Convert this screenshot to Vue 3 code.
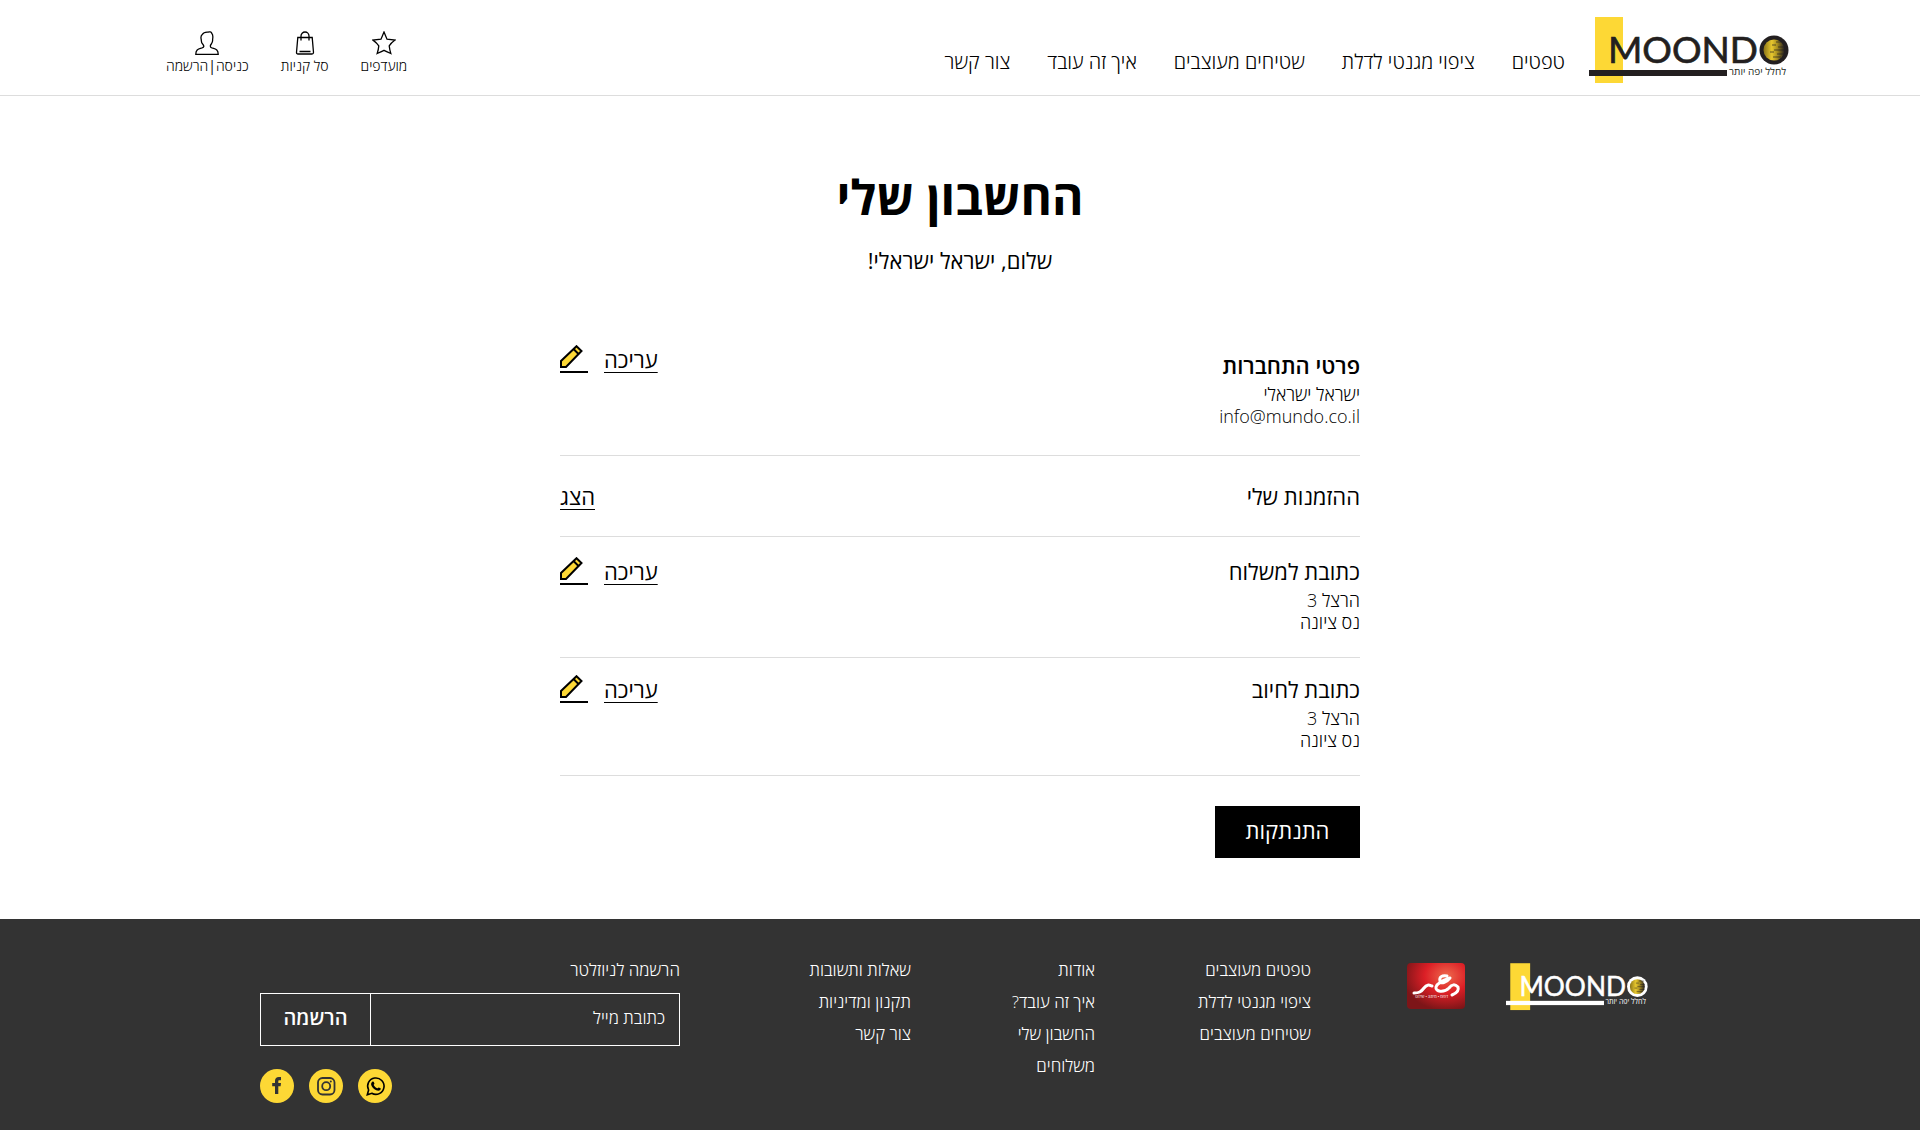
<script setup>
import { ref } from "vue";

const email = ref("");

const navLinks = ["טפטים", "ציפוי מגנטי לדלת", "שטיחים מעוצבים", "איך זה עובד", "צור קשר"];

const rows = [
    { id: "login", title: "פרטי התחברות", lines: ["ישראל ישראלי", "info@mundo.co.il"], action: "עריכה", pencil: true },
    { id: "orders", title: "ההזמנות שלי", lines: [], action: "הצג", pencil: false },
    { id: "shipping", title: "כתובת למשלוח", lines: ["הרצל 3", "נס ציונה"], action: "עריכה", pencil: true },
    { id: "billing", title: "כתובת לחיוב", lines: ["הרצל 3", "נס ציונה"], action: "עריכה", pencil: true },
];

const footerColumns = [
    ["טפטים מעוצבים", "ציפוי מגנטי לדלת", "שטיחים מעוצבים"],
    ["אודות", "איך זה עובד?", "החשבון שלי", "משלוחים"],
    ["שאלות ותשובות", "תקנון ומדיניות", "צור קשר"],
];
</script>

<template>
    <div class="page" dir="rtl">
        <header class="header">
            <a href="#" class="logo" aria-label="MOONDO">
                <svg width="200" height="67" viewBox="0 0 200 67" direction="ltr">
                    <defs>
                        <linearGradient id="moon">
                            <stop offset="0" stop-color="#8a7418" />
                            <stop offset="0.4" stop-color="#e8c82e" />
                            <stop offset="0.65" stop-color="#a88e1f" />
                            <stop offset="1" stop-color="#231f20" />
                        </linearGradient>
                    </defs>
                    <rect x="6" y="0" width="28" height="66" fill="#fdd835" />
                    <text x="19" y="46" class="logo-name" fill="#231f20" stroke="#231f20">MOOND</text>
                    <circle cx="185" cy="33" r="14.5" fill="#231f20" />
                    <circle cx="185" cy="33" r="10.5" fill="url(#moon)" />
                    <path d="M187 25h7M183 28h4M189 30h6M185 33h10M181 35h4M188 37h7M184 40h8" stroke="#231f20" stroke-width="0.7" />
                    <rect x="0" y="53" width="138" height="6" fill="#231f20" />
                    <text x="197" y="58" class="logo-tag" fill="#231f20" direction="rtl">לחלל יפה יותר</text>
                </svg>
            </a>
            <nav class="nav">
                <a v-for="link in navLinks" :key="link" href="#">{{ link }}</a>
            </nav>
            <div class="tools">
                <a href="#">
                    <svg width="24" height="24" viewBox="0 0 24 24">
                        <path d="M12 1l3 7.200 8 .9q-4 3-5.800 5.800.5 4 1.600 7.600Q15 20.800 12 19.300 9 20.800 5.200 22.500 6.500 18.500 6.800 14.900 5 12 1 9.100l8-.9z" />
                    </svg>
                    <span>מועדפים</span>
                </a>
                <a href="#">
                    <svg width="24" height="24" viewBox="0 0 24 24">
                        <path d="M4.800 6.500h14.400l1.300 15q0 1.500-1.500 1.500H5q-1.500 0-1.500-1.500zM8 9.500V5a4 4 0 018 0v4.500M6.500 20.500h11" />
                    </svg>
                    <span>סל קניות</span>
                </a>
                <a href="#">
                    <svg width="24" height="24" viewBox="0 0 24 24">
                        <path d="M.8 23.300C.8 18.500 3 18.200 7 17c2.500-.8 2-2.300 1-3.500C6.500 12 6.200 10.500 6.300 9 5.500 6 6 4.500 7.300 3.500 8.500 1.500 10.500 1 13 1.200c1.500-.7 3.200-.2 3.700 1 1.500 1.500 1.300 4 .9 6.300.2 2-.3 3.300-1.300 4.500-1.300 1.500-1.500 3.300.7 4 4 1.200 6.200 1.500 6.200 6.300z" />
                    </svg>
                    <span>כניסה<b>|</b>הרשמה</span>
                </a>
            </div>
        </header>

        <main class="account">
            <h1>החשבון שלי</h1>
            <p class="greeting">שלום, ישראל ישראלי!</p>

            <section v-for="row in rows" :key="row.id" class="row" :class="row.id">
                <div class="info">
                    <h2>{{ row.title }}</h2>
                    <p v-for="line in row.lines" :key="line">{{ line }}</p>
                </div>
                <div class="action">
                    <a href="#">{{ row.action }}</a>
                    <svg v-if="row.pencil" width="28" height="28" viewBox="0 0 28 28">
                        <path d="M1 22v-6L16.500 1.200l5 4.800L6 22z" fill="#fdd835" stroke="#000" stroke-width="2" />
                        <path d="M13.500 4l5 5" stroke="#000" stroke-width="2" />
                        <path d="M0 27h28" stroke="#000" stroke-width="2" />
                    </svg>
                </div>
            </section>

            <button type="button" class="logout">התנתקות</button>
        </main>

        <footer class="footer">
            <div class="brands">
                <svg width="142" height="48" viewBox="0 0 200 67" direction="ltr">
                    <rect x="6" y="0" width="28" height="66" fill="#fdd835" />
                    <text x="19" y="46" class="logo-name" fill="#fff" stroke="#fff">MOOND</text>
                    <circle cx="185" cy="33" r="14.5" fill="#fff" />
                    <circle cx="185" cy="33" r="10.5" fill="url(#moon)" />
                    <path d="M187 25h7M183 28h4M189 30h6M185 33h10M181 35h4M188 37h7M184 40h8" stroke="#231f20" stroke-width="0.7" />
                    <rect x="0" y="53" width="138" height="6" fill="#fff" />
                    <text x="197" y="58" class="logo-tag" fill="#fff" direction="rtl">לחלל יפה יותר</text>
                </svg>
                <svg width="58" height="46" viewBox="0 0 58 46">
                    <defs>
                        <radialGradient id="red" cx="0.68" cy="0.28" r="0.75">
                            <stop offset="0" stop-color="#ee6a4d" />
                            <stop offset="0.5" stop-color="#dc1f26" />
                            <stop offset="1" stop-color="#7d1518" />
                        </radialGradient>
                    </defs>
                    <rect width="58" height="46" rx="4" fill="url(#red)" />
                    <path d="M7 30c5 0 7-1 10-5s5-3 8-2M40 13c-5-1-8 1-7 5 1 3 6 2 10-3-6 2-13 5-14 9-1 5 8 6 13 1 3-4 6-4 9-1 1 3-1 6-6 8" fill="none" stroke="#fff" stroke-width="3" stroke-linecap="round" stroke-linejoin="round" />
                    <text x="41" y="35" class="stamp" fill="#fff" direction="rtl">דפוס • מיתוג • שילוט</text>
                </svg>
            </div>
            <ul v-for="(column, i) in footerColumns" :key="i">
                <li v-for="item in column" :key="item"><a href="#">{{ item }}</a></li>
            </ul>
            <div class="newsletter">
                <label for="email">הרשמה לניוזלטר</label>
                <form @submit.prevent>
                    <input id="email" v-model="email" type="email" placeholder="כתובת מייל" />
                    <button type="submit">הרשמה</button>
                </form>
                <div class="social">
                    <a href="#" aria-label="WhatsApp">
                        <svg width="34" height="34" viewBox="0 0 34 34">
                            <path d="M9.300 25.700l1.300-4.700a8.200 8.200 0 113.200 3.300z" fill="none" stroke="#000" stroke-width="1.600" />
                            <path d="M14.600 12.600c.5-.3 1-.1 1.200.4l.6 1.500c.2.500-.8 1.200-.7 1.600.8 1.500 2 2.600 3.600 3.200.5 0 1-1.100 1.500-.9l1.700.9c.5.300.2 1.200-.3 1.700-1 1-2.500.9-4 .3-2.500-1-4.300-3-5-5.200-.3-1.400.2-2.800 1.400-3.500z" fill="#000" />
                        </svg>
                    </a>
                    <a href="#" aria-label="Instagram">
                        <svg width="34" height="34" viewBox="0 0 34 34" fill="none" stroke="#333" stroke-width="1.800">
                            <rect x="9" y="9" width="16.500" height="16.500" rx="4.500" />
                            <circle cx="17.200" cy="17.200" r="4" />
                            <circle cx="21.800" cy="12.600" r="1" fill="#333" stroke="none" />
                        </svg>
                    </a>
                    <a href="#" aria-label="Facebook">
                        <svg width="34" height="34" viewBox="0 0 34 34">
                            <path d="M15 25v-7.800h-2.800V14H15v-2.200C15 9.300 16.500 8 18.800 8H21v3.200h-1.500c-1 0-1.200.5-1.200 1.200V14h2.700l-.4 3.200h-2.300V25z" fill="#333" />
                        </svg>
                    </a>
                </div>
            </div>
        </footer>
    </div>
</template>

<style>
body {
    margin: 0;
}
</style>

<style scoped>
.page {
    font-family: "Open Sans", sans-serif;
    font-weight: 300;
    color: #000;
    background: #fff;
}

a {
    color: inherit;
    text-decoration: none;
}

h1,
h2,
p,
ul {
    margin: 0;
    padding: 0;
}

svg {
    display: block;
    flex: none;
}

.header {
    display: flex;
    align-items: flex-start;
    padding: 17px 131px 11px 166px;
    border-bottom: 1px solid #ddd;
}

.logo-name {
    font-family: Lato, sans-serif;
    font-size: 37px;
    font-weight: 400;
    stroke-width: 0.7px;
}

.logo-tag {
    font-size: 10px;
    font-weight: 400;
}

.stamp {
    font-size: 4px;
    font-weight: 400;
}

.nav {
    display: flex;
    gap: 37px;
    margin: 31px 24px 0 0;
    font-size: 20px;
    line-height: 28px;
}

.tools {
    display: flex;
    gap: 32px;
    margin: 14px auto 0 0;
    font-size: 14px;
    line-height: 22px;
}

.tools a {
    display: flex;
    flex-direction: column;
    align-items: center;
}

.tools b {
    font-weight: 400;
}

.tools svg {
    fill: none;
    stroke: #000;
    stroke-width: 1.3;
}

.account {
    max-width: 800px;
    margin: 0 auto;
    padding: 69px 0 61px;
}

h1 {
    font-size: 48px;
    font-weight: 700;
    line-height: 64px;
    text-align: center;
}

.greeting {
    margin: 15px 0 69px;
    font-size: 22px;
    font-weight: 400;
    line-height: 32px;
    text-align: center;
}

.row {
    display: flex;
    justify-content: space-between;
    align-items: flex-start;
    border-bottom: 1px solid #ddd;
}

.login {
    padding-bottom: 28px;
}

.login .info {
    padding-top: 6px;
}

.orders {
    padding: 26px 0;
}

.shipping {
    padding: 20px 0 24px;
}

.billing {
    padding: 17px 0 24px;
}

h2 {
    font-size: 22px;
    font-weight: 400;
    line-height: 28px;
}

.login h2 {
    font-weight: 600;
}

.info p {
    font-size: 18px;
    line-height: 22px;
}

.info h2 + p {
    margin-top: 4px;
}

.action {
    display: flex;
    gap: 16px;
    font-size: 22px;
    font-weight: 400;
    line-height: 28px;
}

.action a {
    text-decoration: underline 1px;
    text-decoration-skip-ink: none;
    text-underline-offset: 4px;
}

.logout {
    display: block;
    margin-top: 30px;
    width: 145px;
    height: 52px;
    padding: 0 0 4px;
    border: 0;
    background: #000;
    color: #fff;
    font: 400 22px "Open Sans", sans-serif;
}

.footer {
    display: grid;
    grid-template-columns: 337fr 216fr 184fr 231fr 420fr;
    padding: 35px 272px 27px 260px;
    background: #333;
    color: #fff;
    font-size: 17px;
    line-height: 32px;
}

.footer ul {
    list-style: none;
}

.brands {
    display: flex;
    gap: 41px;
    padding-top: 9px;
}

.newsletter label {
    display: block;
}

.newsletter form {
    display: flex;
    height: 51px;
    margin: 7px 0 23px;
    border: 1px solid #fff;
}

.newsletter input {
    flex: 1;
    min-width: 0;
    padding: 0 14px 4px;
    border: 0;
    background: none;
    color: #fff;
    font: 300 17px "Open Sans", sans-serif;
}

.newsletter input::placeholder {
    color: #fff;
    opacity: 1;
}

.newsletter form button {
    width: 110px;
    padding: 0 0 4px;
    border: 0;
    border-right: 1px solid #fff;
    background: none;
    color: #fff;
    font: 600 20px "Open Sans", sans-serif;
}

.social {
    display: flex;
    justify-content: flex-end;
    gap: 15px;
}

.social a {
    border-radius: 50%;
    background: #fdd835;
}
</style>
